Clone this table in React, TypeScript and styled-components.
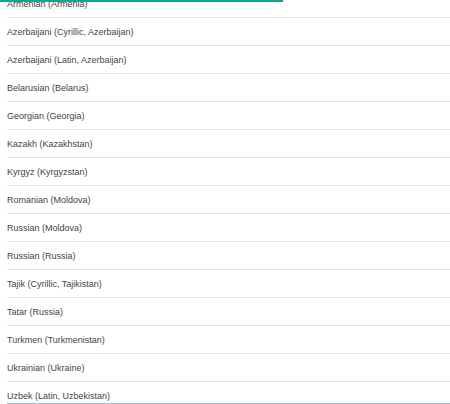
import styled, { createGlobalStyle } from 'styled-components';

const languages = [
    'Armenian (Armenia)',
    'Azerbaijani (Cyrillic, Azerbaijan)',
    'Azerbaijani (Latin, Azerbaijan)',
    'Belarusian (Belarus)',
    'Georgian (Georgia)',
    'Kazakh (Kazakhstan)',
    'Kyrgyz (Kyrgyzstan)',
    'Romanian (Moldova)',
    'Russian (Moldova)',
    'Russian (Russia)',
    'Tajik (Cyrillic, Tajikistan)',
    'Tatar (Russia)',
    'Turkmen (Turkmenistan)',
    'Ukrainian (Ukraine)',
    'Uzbek (Latin, Uzbekistan)',
];

const GlobalStyle = createGlobalStyle`
    html, body {
        margin: 0;
        padding: 0;
        background: #ffffff;
    }
    * {
        box-sizing: border-box;
    }
`;

const App = () => {
    return (
        <>
            <GlobalStyle />
            <Viewport>
                <Progress />
                <List>
                    {languages.map((name, i) => (
                        <Row key={name} $last={i === languages.length - 1}>
                            {name}
                        </Row>
                    ))}
                </List>
            </Viewport>
        </>
    );
};

const Viewport = styled.div`
    position: relative;
    width: 450px;
    height: 404px;
    overflow: hidden;
    background: #ffffff;
`;

const Progress = styled.div`
    position: absolute;
    top: 0;
    left: 0;
    width: 283px;
    height: 2px;
    background-color: #0ea88e;
    z-index: 1;
`;

const List = styled.ul`
    list-style: none;
    margin: -10px 0 0 7px;
    padding: 0;
`;

const Row = styled.li<{ $last?: boolean }>`
    height: ${({ $last }) => ($last ? '22px' : '28px')};
    padding-top: 2px;
    line-height: 24px;
    border-bottom: 1px solid ${({ $last }) => ($last ? '#aabfcb' : '#e0e0e0')};
    font-family: "Liberation Sans", Arial, sans-serif;
    font-size: 9px;
    color: #444444;
    white-space: nowrap;
    user-select: none;
`;

export default App;
